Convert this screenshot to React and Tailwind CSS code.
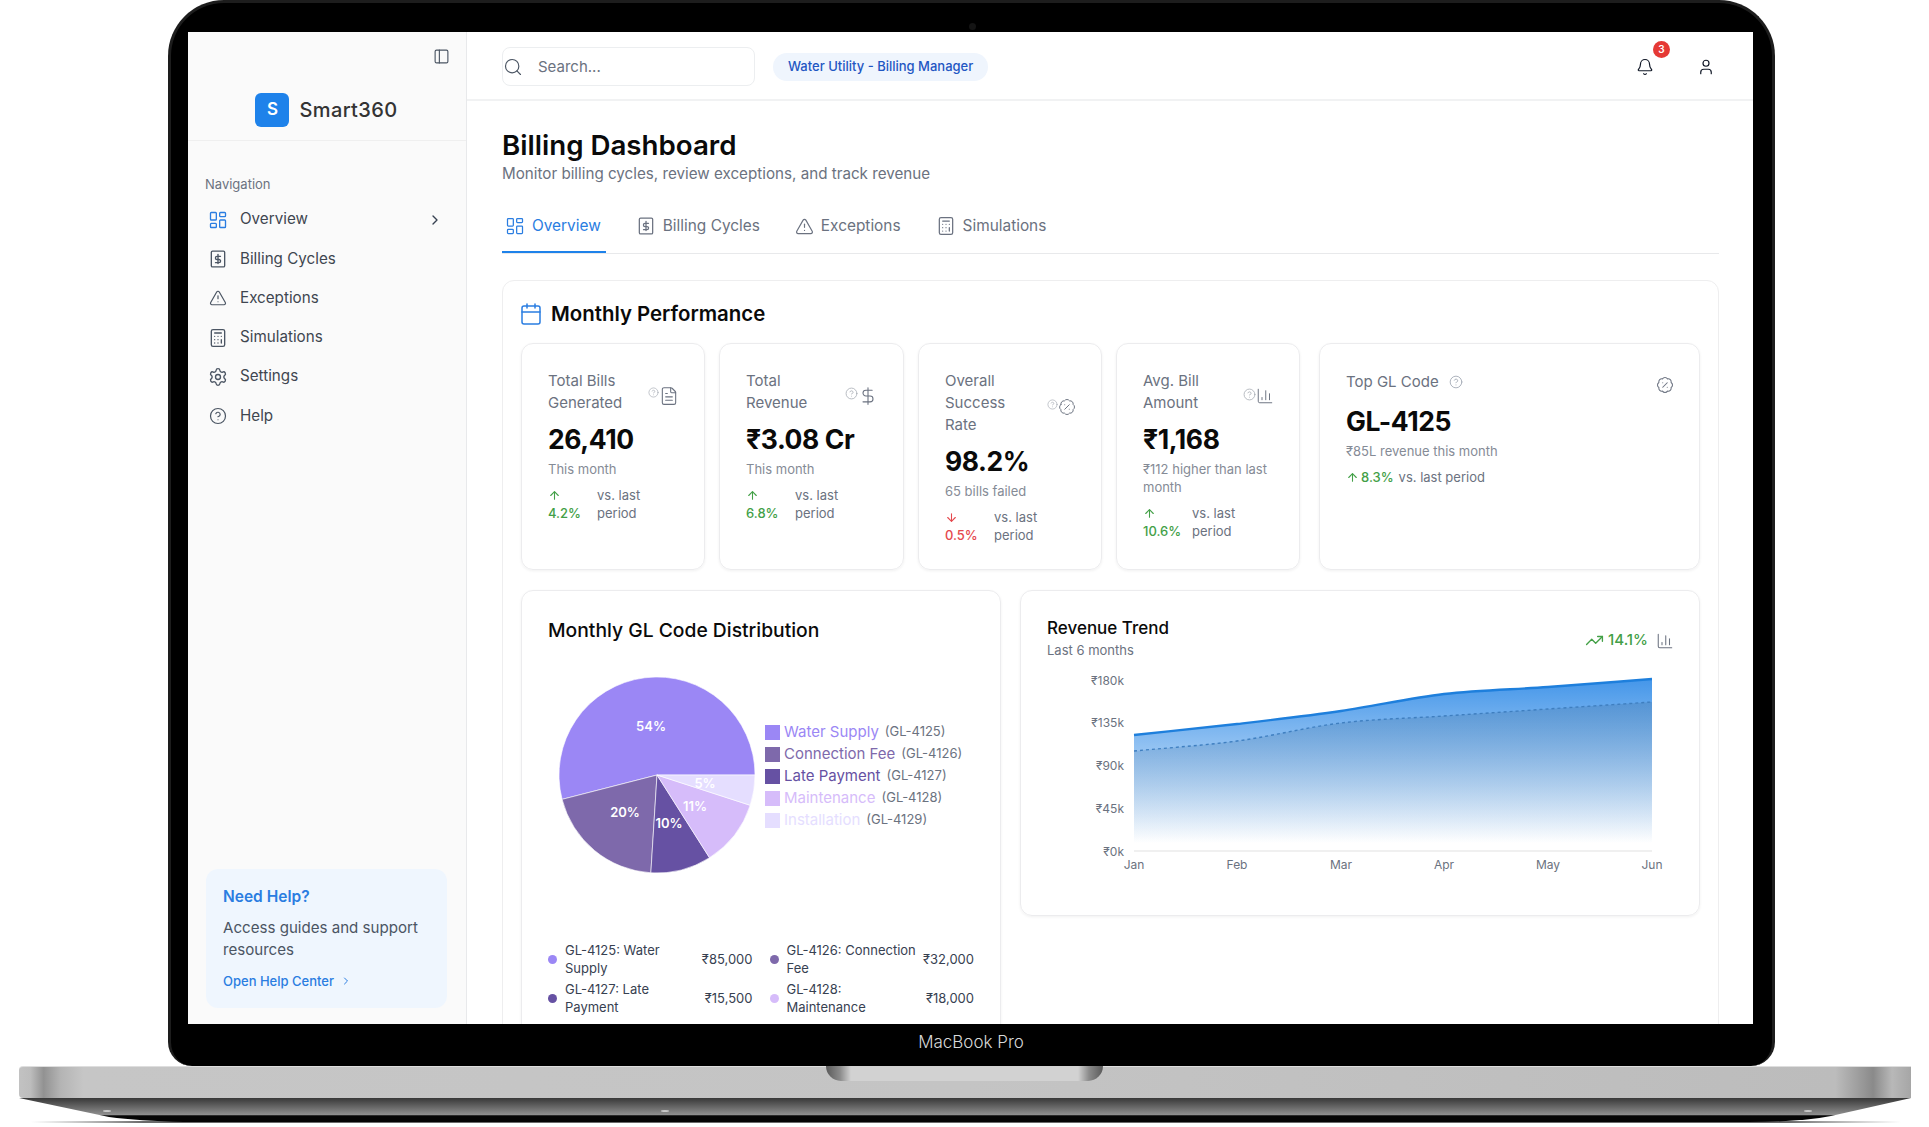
import {
  PanelLeft, Search, LayoutDashboard, TriangleAlert, Calculator, Settings, CircleHelp,
  ChevronRight, Calendar, FileText, DollarSign, BadgePercent, ChartColumn, ArrowUp, ArrowDown,
  TrendingUp, Bell, User,
} from 'lucide-react';

const BillIcon = ({ size = 16, strokeWidth = 2, className = '' }) => (
  <svg width={size} height={size} viewBox="0 0 24 24" fill="none" stroke="currentColor" strokeWidth={strokeWidth} strokeLinecap="round" strokeLinejoin="round" className={className}>
    <rect x="4" y="2.5" width="16" height="19" rx="1.5" />
    <path d="M12 6.5v11" />
    <path d="M15 8.8h-4.2a1.9 1.9 0 0 0 0 3.8h2.4a1.9 1.9 0 0 1 0 3.8H9" />
  </svg>
);

const navItems = [
  { label: 'Overview', icon: LayoutDashboard, active: true },
  { label: 'Billing Cycles', icon: BillIcon },
  { label: 'Exceptions', icon: TriangleAlert },
  { label: 'Simulations', icon: Calculator },
  { label: 'Settings', icon: Settings },
  { label: 'Help', icon: CircleHelp },
];

const tabs = [
  { label: 'Overview', icon: LayoutDashboard, active: true },
  { label: 'Billing Cycles', icon: BillIcon },
  { label: 'Exceptions', icon: TriangleAlert },
  { label: 'Simulations', icon: Calculator },
];

const Sidebar = () => (
  <aside className="w-[279px] h-full shrink-0 bg-[#fafafa] border-r border-[#e8e9eb] flex flex-col">
    <div className="flex justify-end pt-4 pr-4">
      <PanelLeft size={17} strokeWidth={1.6} className="text-[#4b5563]" />
    </div>
    <div className="flex items-center justify-center gap-[10px] mt-[28px] pb-[13px] pr-[1px] border-b border-[#efefef]">
      <div className="w-[34px] h-[34px] rounded-md bg-[#1e82ea] text-white flex items-center justify-center text-[17px] font-semibold">S</div>
      <span className="text-[20px] leading-[34px] font-medium text-[#333] tracking-[0.4px]">Smart360</span>
    </div>
    <div className="pl-[17px] pt-[34px] text-[13px] leading-[18px] text-[#6b7280]">Navigation</div>
    <nav className="mt-[7px]">
      {navItems.map(({ label, icon: Icon, active }) => (
        <div key={label} className="h-[39.3px] flex items-center pr-[23px] text-[15.2px] text-[#3f4650]">
          <span className="w-[52px] pl-2 flex justify-center">
            <Icon size={Icon === TriangleAlert || Icon === CircleHelp ? 18 : 20} strokeWidth={1.6} className={active ? 'text-[#2a7de1]' : 'text-[#4b5563]'} />
          </span>
          <span>{label}</span>
          {active && <ChevronRight size={16} strokeWidth={2} className="ml-auto text-[#374151]" />}
        </div>
      ))}
    </nav>
    <div className="mt-auto mb-4 ml-[18px] mr-[19px] rounded-xl bg-[#eff6fe] px-[17px] pt-[17px] pb-[18px]">
      <div className="text-[15.5px] leading-[22px] font-semibold text-[#2a7de1]">Need Help?</div>
      <p className="mt-[9px] text-[15.1px] leading-[22px] text-[#4b5563]">Access guides and support resources</p>
      <div className="mt-[11px] flex items-center text-[13px] leading-[18px] font-medium text-[#2a7de1]">
        Open Help Center
        <ChevronRight size={12} strokeWidth={2} className="ml-[6px]" />
      </div>
    </div>
  </aside>
);

const Header = () => (
  <header className="h-[69px] shrink-0 border-b-2 border-[#f1f2f3] flex items-center pt-[2px] pl-[35px] pr-[38px] bg-white">
    <div className="w-[253px] h-[39px] rounded-lg border border-[#eceef0] flex items-center text-[15px] text-[#6b7280]">
      <Search size={20} strokeWidth={1.4} className="text-[#4b5563]" />
      <span className="ml-[15px] mt-[1px]">Search...</span>
    </div>
    <div className="ml-[18px] h-[28px] px-[15px] rounded-full bg-[#eff5fd] flex items-center text-[13px] font-medium text-[#1f57c3]">
      Water Utility - Billing Manager
    </div>
    <div className="ml-auto flex items-center gap-[43px] text-[#111827]">
      <div className="relative">
        <Bell size={18} strokeWidth={1.6} />
        <span className="absolute -top-[17px] left-[17px] w-[17px] h-[17px] rounded-full bg-[#e53935] text-white text-[10px] font-semibold flex items-center justify-center">3</span>
      </div>
      <User size={18} strokeWidth={1.6} />
    </div>
  </header>
);

const Trend = ({ value, down }) => (
  <div className="mt-2 flex text-[13px] leading-[18px]">
    <div className={`w-[49px] font-medium ${down ? 'text-[#e5484d]' : 'text-[#43a047]'}`}>
      {down ? <ArrowDown size={13} strokeWidth={2} className="my-[2.5px]" /> : <ArrowUp size={13} strokeWidth={2} className="my-[2.5px]" />}
      {value}
    </div>
    <div className="text-[#6b7280]">vs. last<br />period</div>
  </div>
);

const MetricCard = ({ label, value, sub, trend, down, icon: Icon, iconSize = 20, helpSize = 11, className = '' }) => (
  <div className={`h-[227px] rounded-xl border border-[#ececee] shadow-[0_1px_3px_rgba(0,0,0,0.06)] pl-[26px] pr-[25px] pt-[26px] ${className}`}>
    <div className="flex items-center justify-between">
      <div className="w-[90px] text-[15px] leading-[22px] text-[#6b7280]">{label}</div>
      <div className="mt-[7px] flex items-start text-[#6b7280]">
        <CircleHelp size={helpSize} strokeWidth={1.4} className="mt-[1px] text-[#a3a8b0]" />
        <Icon size={iconSize} strokeWidth={1.3} />
      </div>
    </div>
    <div className="mt-[7px] text-[26.5px] leading-[36px] tracking-[-0.4px] font-bold text-[#0a0a0a]">{value}</div>
    <div className="mt-[3px] text-[13px] leading-[18px] text-[#858b96]">{sub}</div>
    <Trend value={trend} down={down} />
  </div>
);

const TopCodeCard = () => (
  <div className="ml-[5px] flex-1 h-[227px] rounded-xl border border-[#ececee] shadow-[0_1px_3px_rgba(0,0,0,0.06)] pl-[26px] pr-[25px] pt-[27px]">
    <div className="flex items-start justify-between">
      <div className="flex items-center text-[15px] leading-[22px] text-[#6b7280]">
        Top GL Code
        <CircleHelp size={14} strokeWidth={1.4} className="ml-[10px] text-[#9ca3af]" />
      </div>
      <BadgePercent size={18} strokeWidth={1.4} className="mt-[5px] text-[#6b7280]" />
    </div>
    <div className="mt-[9px] text-[26.5px] leading-[36px] tracking-[-0.4px] font-bold text-[#0a0a0a]">GL-4125</div>
    <div className="mt-[3px] text-[13px] leading-[18px] text-[#858b96]">₹85L revenue this month</div>
    <div className="mt-2 flex items-center text-[13px] leading-[18px]">
      <ArrowUp size={13} strokeWidth={2} className="text-[#43a047]" />
      <span className="ml-[2px] font-medium text-[#43a047]">8.3%</span>
      <span className="ml-[5px] text-[#6b7280]">vs. last period</span>
    </div>
  </div>
);

// pie is centred at 105,105 in a 210 box, slices run counter-clockwise from 3 o'clock
const slices = [
  { pct: 54, color: '#9b87f5', name: 'Water Supply', code: 'GL-4125', lx: 99, ly: 56 },
  { pct: 20, color: '#7e69ab', name: 'Connection Fee', code: 'GL-4126', lx: 73, ly: 142 },
  { pct: 10, color: '#6651a3', name: 'Late Payment', code: 'GL-4127', lx: 117, ly: 153 },
  { pct: 11, color: '#d6bcfa', name: 'Maintenance', code: 'GL-4128', lx: 143, ly: 136 },
  { pct: 5, color: '#e5deff', name: 'Installation', code: 'GL-4129', lx: 153, ly: 113 },
];

const pieSlices = () => {
  let start = 0;
  return slices.map((s) => {
    const end = start + (s.pct / 100) * 360;
    const a0 = (start * Math.PI) / 180;
    const a1 = (end * Math.PI) / 180;
    const r = 98;
    const d = `M105 105 L${105 + r * Math.cos(a0)} ${105 - r * Math.sin(a0)} A${r} ${r} 0 ${s.pct > 50 ? 1 : 0} 0 ${105 + r * Math.cos(a1)} ${105 - r * Math.sin(a1)} Z`;
    start = end;
    return { ...s, d };
  });
};

const PieChart = () => (
  <svg width="210" height="210" className="shrink-0 ml-[4px]">
    {pieSlices().map((s) => (
      <path key={s.code} d={s.d} fill={s.color} stroke="#ffffff" strokeWidth="0.6" />
    ))}
    {slices.map((s) => (
      <text key={s.code} x={s.lx} y={s.ly} fill="#ffffff" fontSize="13" fontWeight="600" textAnchor="middle" dominantBaseline="central" fontFamily="Inter">
        {s.pct}%
      </text>
    ))}
  </svg>
);

const glRows = [
  { label: 'GL-4125: Water Supply', value: '₹85,000', color: '#9b87f5' },
  { label: 'GL-4126: Connection Fee', value: '₹32,000', color: '#7e69ab' },
  { label: 'GL-4127: Late Payment', value: '₹15,500', color: '#6651a3' },
  { label: 'GL-4128: Maintenance', value: '₹18,000', color: '#d6bcfa' },
];

const DistributionCard = () => (
  <div className="w-[480px] shrink-0 rounded-xl border border-[#ececee] shadow-[0_1px_3px_rgba(0,0,0,0.06)] pl-[26px] pr-[26px] pt-[25px] pb-6">
    <h3 className="text-[19.3px] leading-[28px] font-medium text-[#0a0a0a]">Monthly GL Code Distribution</h3>
    <div className="mt-[26px] flex h-[210px]">
      <PieChart />
      <ul className="ml-[3px] pt-[51px]">
        {slices.map((s) => (
          <li key={s.code} className="h-[22px] flex items-center">
            <span className="w-[15px] h-[15px] mr-1" style={{ backgroundColor: s.color }} />
            <span className="text-[15px]" style={{ color: s.color }}>{s.name}</span>
            <span className="ml-[6px] text-[13px] text-[#6b7280]">({s.code})</span>
          </li>
        ))}
      </ul>
    </div>
    <div className="mt-[62px] grid grid-cols-2 gap-x-[17px] gap-y-1">
      {glRows.map((r) => (
        <div key={r.label} className="flex items-center text-[13px] leading-[17.5px] text-[#374151]">
          <span className="w-[9px] h-[9px] rounded-full shrink-0" style={{ backgroundColor: r.color }} />
          <span className="ml-2 w-[133px]">{r.label}</span>
          <span className="ml-auto">{r.value}</span>
        </div>
      ))}
    </div>
  </div>
);

const upper = [[87, 66], [190, 55], [294, 42], [397, 25], [501, 18], [605, 10]];
const lower = [[87, 82], [190, 72], [294, 54], [397, 47], [501, 40], [605, 33]];

const smooth = (pts) => {
  let d = `M${pts[0][0]} ${pts[0][1]}`;
  for (let i = 0; i < pts.length - 1; i++) {
    const [x0, y0] = pts[i];
    const [x1, y1] = pts[i + 1];
    const prev = pts[i - 1] || pts[i];
    const next = pts[i + 2] || pts[i + 1];
    const c = (x1 - x0) / 3;
    const m0 = (y1 - prev[1]) / (x1 - prev[0]);
    const m1 = (next[1] - y0) / (next[0] - x0);
    d += ` C${x0 + c} ${y0 + m0 * c} ${x1 - c} ${y1 - m1 * c} ${x1} ${y1}`;
  }
  return d;
};

const RevenueChart = () => (
  <svg width="626" height="210" className="mt-[10px] font-['Inter',sans-serif]">
    <defs>
      <linearGradient id="upperFill" gradientUnits="userSpaceOnUse" x1="0" y1="10" x2="0" y2="174">
        <stop offset="0" stopColor="#2b88e6" stopOpacity="0.88" />
        <stop offset="1" stopColor="#2b88e6" stopOpacity="0" />
      </linearGradient>
      <linearGradient id="lowerFill" gradientUnits="userSpaceOnUse" x1="0" y1="33" x2="0" y2="174">
        <stop offset="0" stopColor="#3f6f9f" stopOpacity="0.3" />
        <stop offset="1" stopColor="#3f6f9f" stopOpacity="0" />
      </linearGradient>
    </defs>
    <line x1="87" x2="605" y1="182" y2="182" stroke="#f0f0f0" strokeWidth="2" />
    <path d={`${smooth(upper)} L605 178 L87 178 Z`} fill="url(#upperFill)" />
    <path d={`${smooth(lower)} L605 178 L87 178 Z`} fill="url(#lowerFill)" />
    <path d={smooth(upper)} fill="none" stroke="#1e7fdc" strokeWidth="2.4" />
    <path d={smooth(lower)} fill="none" stroke="#3f7fc0" strokeWidth="1.4" strokeDasharray="3 3" />
    {[['₹180k', 11], ['₹135k', 53], ['₹90k', 96], ['₹45k', 139], ['₹0k', 182]].map(([t, y]) => (
      <text key={t} x="77" y={y} textAnchor="end" dominantBaseline="central" fontSize="12" fill="#6b7280">{t}</text>
    ))}
    {[['Jan', 87], ['Feb', 190], ['Mar', 294], ['Apr', 397], ['May', 501], ['Jun', 605]].map(([t, x]) => (
      <text key={t} x={x} y="195" textAnchor="middle" dominantBaseline="central" fontSize="12" fill="#6b7280">{t}</text>
    ))}
  </svg>
);

const TrendCard = () => (
  <div className="w-[680px] shrink-0 h-[326px] rounded-xl border border-[#ececee] shadow-[0_1px_3px_rgba(0,0,0,0.06)] pl-[26px] pr-[25px] pt-[25px]">
    <div className="flex items-center justify-between">
      <div>
        <h3 className="text-[17px] leading-[24px] font-medium text-[#0a0a0a]">Revenue Trend</h3>
        <p className="mt-[1px] text-[13px] leading-[18px] text-[#6b7280]">Last 6 months</p>
      </div>
      <div className="mt-[6px] flex items-center text-[15px] font-medium text-[#43a047]">
        <TrendingUp size={19} strokeWidth={1.7} />
        <span className="ml-1">14.1%</span>
        <ChartColumn size={18} strokeWidth={1.4} className="ml-2 text-[#6b7280]" />
      </div>
    </div>
    <RevenueChart />
  </div>
);

const Main = () => (
  <main className="flex-1 min-w-0 h-full flex flex-col bg-white">
    <Header />
    <div className="pl-[35px] pr-[34px] pt-[27px]">
      <h1 className="text-[27.7px] leading-[34px] font-semibold text-[#0a0a0a]">Billing Dashboard</h1>
      <p className="text-[15.2px] leading-[24px] text-[#6b7280]">Monitor billing cycles, review exceptions, and track revenue</p>
      <div className="mt-[15px] flex gap-[27px] border-b border-[#e8e9eb] h-[53px]">
        {tabs.map(({ label, icon: Icon, active }) => (
          <div key={label} className={`h-[52px] pl-[3px] pr-[5px] flex items-center gap-[7px] text-[15.4px] border-b-2 ${active ? 'border-[#1e82ea] text-[#2a7de1]' : 'border-transparent text-[#6b7280]'}`}>
            <Icon size={Icon === TriangleAlert ? 19 : 20} strokeWidth={1.5} />
            {label}
          </div>
        ))}
      </div>
      <section className="mt-[26px] rounded-xl border border-[#eeeeef] px-[18px] pt-[19px] pb-6">
        <div className="h-[28px] flex items-center gap-2">
          <Calendar size={24} strokeWidth={1.5} className="-ml-[2px] text-[#2a7de1]" />
          <h2 className="text-[20.4px] font-semibold text-[#0a0a0a]">Monthly Performance</h2>
        </div>
        <div className="mt-[15px] flex gap-[14px]">
          <MetricCard className="w-[184px]" label="Total Bills Generated" value="26,410" sub="This month" trend="4.2%" icon={FileText} />
          <MetricCard className="w-[185px]" label="Total Revenue" value="₹3.08 Cr" sub="This month" trend="6.8%" icon={DollarSign} helpSize={13} />
          <MetricCard className="w-[184px]" label="Overall Success Rate" value="98.2%" sub="65 bills failed" trend="0.5%" down icon={BadgePercent} iconSize={18} />
          <MetricCard className="w-[184px]" label="Avg. Bill Amount" value="₹1,168" sub="₹112 higher than last month" trend="10.6%" icon={ChartColumn} iconSize={18} helpSize={13} />
          <TopCodeCard />
        </div>
        <div className="mt-5 flex gap-[19px]">
          <DistributionCard />
          <TrendCard />
        </div>
      </section>
    </div>
  </main>
);

const LaptopBase = () => (
  <div className="relative ml-[19px] w-[1892px]">
    <div className="h-[32px] rounded-l-sm border-t border-[#dedede] bg-[linear-gradient(90deg,#c2c2c2_0%,#bdbdbd_0.6%,#929292_1.3%,#b4b4b4_2.2%,#c6c6c6_3.4%,#c4c4c4_50%,#bcbcbc_96%,#8a8a8a_98%,#b8b8b8_99%,#a6a6a6_100%)]" />
    <div className="absolute top-0 left-[807px] w-[277px] h-[15px] rounded-b-[16px] bg-[linear-gradient(90deg,#5a5a5a_0%,#8a8a8a_5%,#d2d2d2_9%,#d2d2d2_91%,#8a8a8a_95%,#5a5a5a_100%)]" />
    <svg width="1892" height="27" className="block">
      <defs>
        <linearGradient id="underside" x1="0" y1="0" x2="0" y2="1">
          <stop offset="0" stopColor="#383838" />
          <stop offset="0.7" stopColor="#8f8f8f" />
          <stop offset="0.74" stopColor="#050505" />
          <stop offset="1" stopColor="#050505" />
        </linearGradient>
        <linearGradient id="floorShadow" x1="0" y1="0" x2="1" y2="0">
          <stop offset="0" stopColor="#8a8a8a" stopOpacity="0" />
          <stop offset="0.06" stopColor="#6a6a6a" />
          <stop offset="0.94" stopColor="#6a6a6a" />
          <stop offset="1" stopColor="#8a8a8a" stopOpacity="0" />
        </linearGradient>
      </defs>
      <rect x="12" y="23" width="1870" height="2" fill="url(#floorShadow)" />
      <path d="M0 0 L1892 0 L1812 18 Q1780 24 1730 24 L165 24 Q120 23 90 19 Z" fill="url(#underside)" />
      <ellipse cx="88" cy="13" rx="4" ry="1" fill="#c8c8c8" />
      <ellipse cx="646" cy="13" rx="4" ry="1" fill="#c8c8c8" />
      <ellipse cx="1789" cy="13" rx="4" ry="1" fill="#c8c8c8" />
    </svg>
  </div>
);

export default function App() {
  return (
    <div className="w-[1929px] h-[1127px] overflow-hidden bg-white font-['Inter',sans-serif]">
      <div className="relative ml-[168px] w-[1607px] h-[1066px] rounded-t-[56px] rounded-b-[24px] bg-black border-[3px] border-b-0 border-[#1d1d1d] pt-[29px] pl-[17px]">
        <span className="absolute top-[20px] left-[798px] w-[7px] h-[7px] rounded-full bg-[#141414]" />
        <div className="w-[1565px] h-[992px] overflow-hidden flex">
          <Sidebar />
          <Main />
        </div>
        <div className="h-[38px] flex items-center justify-center -translate-x-[9px] text-[17px] font-light text-[#d8d8d8]">MacBook Pro</div>
      </div>
      <LaptopBase />
    </div>
  );
}
